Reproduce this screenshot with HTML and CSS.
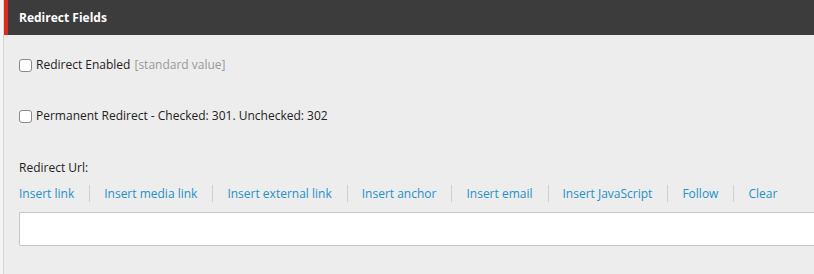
FILE: index.html
```html
<!DOCTYPE html>
<html>
<head>
<meta charset="utf-8">
<link rel="stylesheet" href="styles.css">
</head>
<body>
<div class="page">
  <div class="section">
    <div class="header"><span class="title">Redirect Fields</span></div>
    <div class="body">
      <div class="field check-field">
        <label class="check"><span class="box"></span><span>Redirect Enabled</span> <span class="std">[standard value]</span></label>
      </div>
      <div class="field check-field second">
        <label class="check"><span class="box"></span><span>Permanent Redirect - Checked: 301. Unchecked: 302</span></label>
      </div>
      <div class="field url-field">
        <div class="label">Redirect Url:</div>
        <div class="links">
          <a class="link">Insert link</a>
          <a class="link">Insert media link</a>
          <a class="link">Insert external link</a>
          <a class="link">Insert anchor</a>
          <a class="link">Insert email</a>
          <a class="link">Insert JavaScript</a>
          <a class="link">Follow</a>
          <a class="link">Clear</a>
        </div>
        <div class="input"></div>
      </div>
    </div>
  </div>
</div>
</body>
</html>
```

FILE: styles.css
```css
html, body {
  margin: 0;
  padding: 0;
  background: #ededed;
  font-family: "Open Sans", "Liberation Sans", sans-serif;
  font-size: 12px;
  color: #222;
}
.page {
  width: 814px;
  height: 274px;
  overflow: hidden;
  border-left: 3px solid #f3f3f3;
  box-sizing: border-box;
}
.section {
  border-left: 1px solid #d6d6d6;
  height: 100%;
}
.header {
  height: 35px;
  background: #3c3c3c;
  border-left: 4px solid #dc291e;
  display: flex;
  align-items: center;
  padding-left: 11px;
  box-sizing: border-box;
}
.title {
  color: #fff;
  font-weight: 700;
  font-size: 12px;
}
.body {
  padding-left: 15px;
}
.check-field {
  padding-top: 21px;
  height: 17px;
}
.check-field.second {
  padding-top: 34px;
}
.check {
  display: flex;
  align-items: center;
  line-height: 17px;
}
.box {
  width: 11px;
  height: 11px;
  border: 1px solid #8a8a8a;
  border-radius: 3px;
  background: #fff;
  margin-right: 4px;
  margin-top: 1px;
}
.std {
  color: #999;
  margin-left: 4px;
}
.url-field {
  padding-top: 35px;
}
.label {
  line-height: 17px;
}
.links {
  display: flex;
  margin-top: 9px;
  line-height: 17px;
}
.link {
  color: #2490c7;
  padding: 0 15px 0 14px;
  border-left: 1px solid #cfcfcf;
  line-height: 17px;
}
.link:first-child {
  padding-left: 0;
  border-left: none;
}
.input {
  margin-top: 10px;
  height: 32px;
  background: #fff;
  border: 1px solid #c6c6c6;
  border-right: none;
  border-radius: 2px 0 0 2px;
}
```
